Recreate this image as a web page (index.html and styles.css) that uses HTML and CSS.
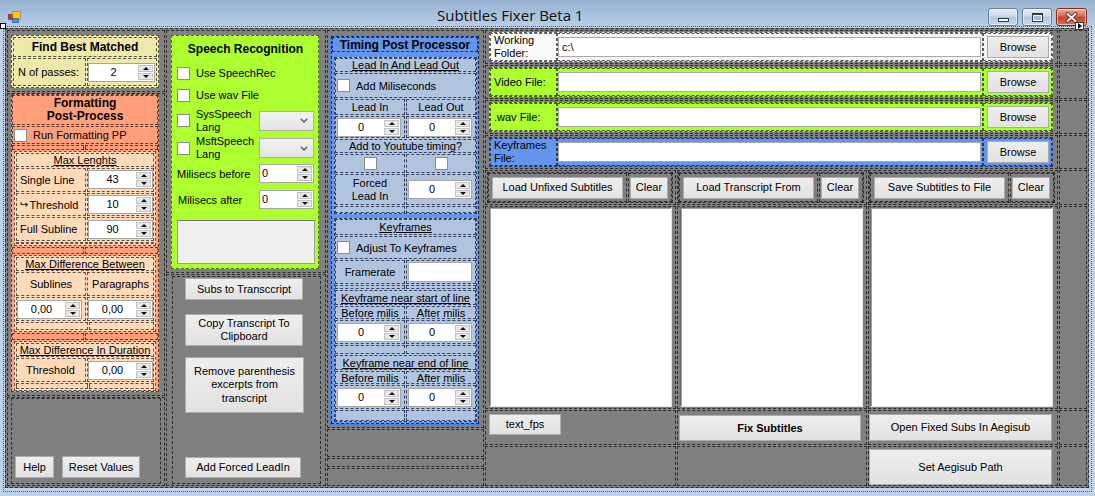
FILE: index.html
```html
<!DOCTYPE html>
<html>
<head>
<meta charset="utf-8">
<title>Subtitles Fixer Beta 1</title>
<link rel="stylesheet" href="styles.css">
</head>
<body>
<div class="titlebar">
  <svg class="appicon" width="14" height="14" viewBox="0 0 14 14">
    <rect x="0.5" y="5.5" width="4" height="5" fill="#d8232a" stroke="#8a1c1c" stroke-width="0.6"/>
    <rect x="4.5" y="2.5" width="8" height="8" fill="#f7c325" stroke="#b27c12" stroke-width="0.6"/>
    <rect x="4.5" y="9.5" width="6" height="4" fill="#3d8fe2" stroke="#1d4f98" stroke-width="0.6"/>
  </svg>
  <div class="title">Subtitles Fixer Beta 1</div>
  <div class="wbtns">
    <div class="wb"><span class="ic-min"></span></div>
    <div class="wb"><span class="ic-max"></span></div>
    <div class="wb close"><svg width="13" height="11" viewBox="0 0 13 11"><path d="M2.5 2 L10.5 9 M10.5 2 L2.5 9" stroke="#5a1a10" stroke-width="3.6" stroke-linecap="round"/><path d="M2.5 2 L10.5 9 M10.5 2 L2.5 9" stroke="#fff" stroke-width="2" stroke-linecap="round"/></svg></div>
  </div>
</div>
<span class="handle-l"></span>
<span class="handle-r"></span>

<div class="frame">
 <div class="client">

  <!-- column 1 -->
  <div class="col c1">
    <div class="d cell-find">
      <div class="panel khaki find">
        <div class="d hdr b">Find Best Matched</div>
        <div class="row2">
          <div class="d lblc">N of passes:</div>
          <div class="d inpc"><div class="num w67"><span class="v">2</span><span class="spin"><i></i><i></i></span></div></div>
        </div>
      </div>
    </div>
    <div class="d cell-fmt">
      <div class="panel salmon fmt">
        <div class="d ftitle b">Formatting<br>Post-Process</div>
        <div class="d frun"><span class="cb"></span><span>Run Formatting PP</span></div>
        <div class="fsp h5"><div class="d l"></div><div class="d r"></div></div>
        <div class="sub peach s1">
          <div class="d shdr"><span class="u">Max Lenghts</span></div>
          <div class="srow"><div class="d lab">Single Line</div><div class="d inp"><div class="num w65"><span class="v">43</span><span class="spin"><i></i><i></i></span></div></div></div>
          <div class="srow"><div class="d lab"><span class="hook">↪</span>Threshold</div><div class="d inp"><div class="num w65"><span class="v">10</span><span class="spin"><i></i><i></i></span></div></div></div>
          <div class="srow"><div class="d lab">Full Subline</div><div class="d inp"><div class="num w65"><span class="v">90</span><span class="spin"><i></i><i></i></span></div></div></div>
          <div class="fill"><div class="d l"></div><div class="d r"></div></div>
        </div>
        <div class="fsp h7"><div class="d l"></div><div class="d r"></div></div>
        <div class="sub peach s2">
          <div class="d shdr h16"><span class="u">Max Difference Between</span></div>
          <div class="srow h22"><div class="d lab ctr">Sublines</div><div class="d inp ctr">Paragraphs</div></div>
          <div class="srow h25"><div class="d lab p0"><div class="num w65"><span class="v">0,00</span><span class="spin"><i></i><i></i></span></div></div><div class="d inp"><div class="num w65"><span class="v">0,00</span><span class="spin"><i></i><i></i></span></div></div></div>
          <div class="fill"><div class="d l"></div><div class="d r"></div></div>
        </div>
        <div class="fsp h7"><div class="d l"></div><div class="d r"></div></div>
        <div class="sub peach s3">
          <div class="d shdr h15"><span class="u">Max Difference In Duration</span></div>
          <div class="srow h22"><div class="d lab p9">Threshold</div><div class="d inp"><div class="num w65"><span class="v">0,00</span><span class="spin"><i></i><i></i></span></div></div></div>
          <div class="fill"><div class="d l"></div><div class="d r"></div></div>
        </div>
      </div>
    </div>
    <div class="d cell-c1b">
      <div class="d box1">
        <div class="btn help">Help</div>
        <div class="btn reset">Reset Values</div>
      </div>
    </div>
  </div>

  <!-- column 2 -->
  <div class="col c2">
    <div class="d cell-sr">
      <div class="panel green sr">
        <div class="srtitle b">Speech Recognition</div>
        <div class="srr h22"><span class="cb"></span><span>Use SpeechRec</span></div>
        <div class="srr h22"><span class="cb"></span><span>Use wav File</span></div>
        <div class="srr h29"><span class="cb"></span><span class="two">SysSpeech<br>Lang</span>
          <div class="combo"><svg width="8" height="5" viewBox="0 0 8 5"><polyline points="0.8,0.8 4,4 7.2,0.8" fill="none" stroke="#606060" stroke-width="1.5"/></svg></div></div>
        <div class="srr h26"><span class="cb"></span><span class="two">MsftSpeech<br>Lang</span>
          <div class="combo"><svg width="8" height="5" viewBox="0 0 8 5"><polyline points="0.8,0.8 4,4 7.2,0.8" fill="none" stroke="#606060" stroke-width="1.5"/></svg></div></div>
        <div class="srr h25"><span>Milisecs before</span><div class="num w55 left ml-auto"><span class="v">0</span><span class="spin"><i></i><i></i></span></div></div>
        <div class="srr h27"><span class="ml1">Milisecs after</span><div class="num w55 left ml-auto"><span class="v">0</span><span class="spin"><i></i><i></i></span></div></div>
        <div class="srbox"></div>
      </div>
    </div>
    <div class="d cell-c2b">
      <div class="d box2">
        <div class="btn b1">Subs to Transccript</div>
        <div class="btn b2">Copy Transcript To<br>Clipboard</div>
        <div class="btn b3">Remove parenthesis<br>excerpts from<br>transcript</div>
        <div class="btn b4">Add Forced LeadIn</div>
      </div>
    </div>
  </div>

  <!-- column 3 -->
  <div class="col c3">
    <div class="d cell-tp">
      <div class="panel blue tp">
        <div class="d tphdr b">Timing Post Processor</div>
        <div class="band h5"></div>
        <div class="sub steel lead">
          <div class="d fr h14"><span class="u">Lead In And Lead Out</span></div>
          <div class="d fr h25 lefted"><span class="cb"></span><span>Add Miliseconds</span></div>
          <div class="tr h16"><div class="d tl">Lead In</div><div class="d trr">Lead Out</div></div>
          <div class="tr h22"><div class="d tl st"><div class="num w64"><span class="v">0</span><span class="spin"><i></i><i></i></span></div></div><div class="d trr st"><div class="num w64"><span class="v">0</span><span class="spin"><i></i><i></i></span></div></div></div>
          <div class="d fr h14">Add to Youtube timing?</div>
          <div class="tr h19"><div class="d tl"><span class="cb"></span></div><div class="d trr"><span class="cb"></span></div></div>
          <div class="tr h31"><div class="d tl two">Forced<br>Lead In</div><div class="d trr st"><div class="num w64"><span class="v">0</span><span class="spin"><i></i><i></i></span></div></div></div>
          <div class="tr grow"><div class="d tl"></div><div class="d trr"></div></div>
        </div>
        <div class="band h4"></div>
        <div class="sub steel kf">
          <div class="d fr h16"><span class="u">Keyframes</span></div>
          <div class="d fr h23 lefted"><span class="cb"></span><span>Adjust To Keyframes</span></div>
          <div class="tr h24"><div class="d tl">Framerate</div><div class="d trr st"><div class="tb fr-tb"></div></div></div>
          <div class="tr h4"><div class="d tl"></div><div class="d trr"></div></div>
          <div class="d fr h15"><span class="u">Keyframe near start of line</span></div>
          <div class="tr h13"><div class="d tl">Before milis</div><div class="d trr">After milis</div></div>
          <div class="tr h24"><div class="d tl st"><div class="num w64"><span class="v">0</span><span class="spin"><i></i><i></i></span></div></div><div class="d trr st"><div class="num w64"><span class="v">0</span><span class="spin"><i></i><i></i></span></div></div></div>
          <div class="tr h9"><div class="d tl"></div><div class="d trr"></div></div>
          <div class="d fr h15"><span class="u">Keyframe near end of line</span></div>
          <div class="tr h13"><div class="d tl">Before milis</div><div class="d trr">After milis</div></div>
          <div class="tr h24"><div class="d tl st"><div class="num w64"><span class="v">0</span><span class="spin"><i></i><i></i></span></div></div><div class="d trr st"><div class="num w64"><span class="v">0</span><span class="spin"><i></i><i></i></span></div></div></div>
          <div class="tr grow"><div class="d tl"></div><div class="d trr"></div></div>
        </div>
      </div>
    </div>
    <div class="d h28"></div>
    <div class="d h9"></div>
    <div class="d grow"></div>
  </div>

  <!-- right area -->
  <div class="right">
    <div class="d frow">
      <div class="fpanel white">
        <div class="d flab two">Working<br>Folder:</div>
        <div class="d ftxt"><div class="tb ftb">c:\</div></div>
        <div class="d fbr"><div class="btn browse">Browse</div></div>
      </div>
    </div>
    <div class="d dcol"></div>
    <div class="d frow">
      <div class="fpanel green">
        <div class="d flab">Video File:</div>
        <div class="d ftxt"><div class="tb ftb"></div></div>
        <div class="d fbr"><div class="btn browse">Browse</div></div>
      </div>
    </div>
    <div class="d dcol"></div>
    <div class="d frow">
      <div class="fpanel green">
        <div class="d flab">.wav File:</div>
        <div class="d ftxt"><div class="tb ftb"></div></div>
        <div class="d fbr"><div class="btn browse">Browse</div></div>
      </div>
    </div>
    <div class="d dcol"></div>
    <div class="d frow">
      <div class="fpanel blue">
        <div class="d flab two">Keyframes<br>File:</div>
        <div class="d ftxt"><div class="tb ftb"></div></div>
        <div class="d fbr"><div class="btn browse">Browse</div></div>
      </div>
    </div>
    <div class="d dcol"></div>

    <div class="d gcell ga">
      <div class="d grp"><div class="d gb"><div class="btn gbtn">Load Unfixed Subtitles</div></div><div class="d gc"><div class="btn clr">Clear</div></div></div>
    </div>
    <div class="d gcell gbb">
      <div class="d grp"><div class="d gb"><div class="btn gbtn">Load Transcript From</div></div><div class="d gc"><div class="btn clr">Clear</div></div></div>
    </div>
    <div class="d gcell gcc">
      <div class="d grp"><div class="d gb"><div class="btn gbtn">Save Subtitles to File</div></div><div class="d gc"><div class="btn clr">Clear</div></div></div>
    </div>
    <div class="d dcol"></div>

    <div class="d tac ta-a"><div class="ta"></div></div>
    <div class="d tac ta-b"><div class="ta"></div></div>
    <div class="d tac ta-c"><div class="ta"></div></div>
    <div class="d dcol"></div>

    <div class="d r7a"><div class="btn fps">text_fps</div></div>
    <div class="d r7b"><div class="btn fix b11">Fix Subtitles</div></div>
    <div class="d r7c"><div class="btn open">Open Fixed Subs In Aegisub</div></div>
    <div class="d dcol"></div>

    <div class="d"></div>
    <div class="d"></div>
    <div class="d r8c"><div class="btn aeg">Set Aegisub Path</div></div>
    <div class="d dcol"></div>
  </div>

 </div>
</div>
</body>
</html>
```

FILE: styles.css
```css
*{box-sizing:border-box;margin:0;padding:0}
html,body{width:1095px;height:496px;overflow:hidden}
body{background:#bed3ea;font-family:"Liberation Sans",Arial,sans-serif;font-size:11px;color:#000;position:relative}

/* title bar */
.titlebar{height:26px;display:flex;align-items:flex-start;padding-left:8px;background:linear-gradient(#98b2d1,#a9c2df 60%,#b6cde7)}
.appicon{margin-top:9px;flex:none}
.title{margin-left:415px;margin-top:5px;font-family:"Open Sans","Noto Sans",sans-serif;font-size:15px;line-height:20px;color:#101010}
.wbtns{margin-left:auto;margin-right:8px;margin-top:8px;display:flex;gap:4px}
.wb{width:30px;height:18px;border:1px solid #6a7e9b;border-radius:3px;background:linear-gradient(#e6edf6 0%,#ccd9ea 45%,#b3c6de 50%,#c7d7ea 100%);display:flex;align-items:center;justify-content:center;box-shadow:inset 0 0 0 1px rgba(255,255,255,.55)}
.wb.close{width:31px;border-color:#7b2a1c;background:linear-gradient(#eab0a2 0%,#d46a52 45%,#c2432a 50%,#d7715a 100%)}
.ic-min{width:11px;height:4px;margin-top:6px;background:#fff;border:1px solid #2c3a50}
.ic-max{width:11px;height:9px;border:1px solid #2c3a50;border-top-width:2px;box-shadow:inset 0 0 0 1px #fff;background:#a9bcd5}
.handle-l{position:absolute;left:0;top:23px;width:6px;height:6px;background:#fff;border:1px solid #000}
.handle-r{position:absolute;left:1075px;top:22px;width:9px;height:8px;background:#fff;border:1px solid #333;display:flex;align-items:center;justify-content:center}
.handle-r::after{content:"";border-top:3px solid transparent;border-bottom:3px solid transparent;border-left:4px solid #000;margin-left:1px}

/* frame & client */
.frame{margin:0 3px;height:466px;border:1px dotted #4d5a69;padding:1px 0 0 1px}
.client{width:1084px;height:460px;background:#808080;border:1px dashed #2e2e2e;padding:1px;display:flex;gap:1px}
.d{border:1px dashed rgba(0,0,0,.62)}
.col{display:flex;flex-direction:column;gap:1px}
.c1{width:158px}
.c2{width:160px}
.c3{width:157px}
.grow{flex:1}
.b{font-weight:bold;font-size:12px}
.b11{font-weight:bold}
.u{text-decoration:underline;text-underline-offset:1px}
.two{line-height:13px}

/* common controls */
.cb{width:13px;height:13px;background:#fff;border:1px solid #8b8c8c;flex:none;display:block}
.num{display:flex;height:19px;background:#fff;border:1px solid #a6a6a6;flex:none}
.num .v{flex:1;text-align:center;line-height:17px}
.num.left .v{text-align:left;padding-left:2px}
.w67{width:67px}.w65{width:65px}.w64{width:64px}.w55{width:55px}
.spin{width:16px;display:flex;flex-direction:column;gap:1px;padding:1px 1px 1px 0;flex:none}
.spin i{flex:1;background:#e7e7e7;border:1px solid #c4c4c4;display:flex;align-items:center;justify-content:center}
.spin i::after{content:"";border-left:3px solid transparent;border-right:3px solid transparent}
.spin i:first-child::after{border-bottom:3px solid #111}
.spin i:last-child::after{border-top:3px solid #111}
.btn{display:flex;align-items:center;justify-content:center;text-align:center;background:linear-gradient(#eeeeee,#e2e2e2);border:1px solid #acacac;line-height:13px;flex:none;color:#000}
.tb{background:#fff;border:1px solid #a9abaf}
.combo{margin-left:auto;width:55px;height:20px;background:linear-gradient(#f3f3f3,#e3e3e3);border:1px solid #acacac;display:flex;align-items:center;justify-content:flex-end;padding-right:5px;flex:none}
.ml-auto{margin-left:auto}
.ml1{margin-left:1px}

.panel{display:flex;flex-direction:column}
.khaki{background:#eee8aa}
.salmon{background:#ffa07a}
.peach{background:#ffdab9}
.green{background:#adff2f}
.blue{background:#6495ed}
.steel{background:#b0c4de}
.white{background:#f5f5f5}

/* column 1 */
.cell-find{height:62px;padding:4px 0 0 3px}
.find{width:148px;height:53px;border:1px dashed rgba(0,0,0,.62);padding:1px;gap:1px}
.find .hdr{height:20px;display:flex;align-items:center;justify-content:center}
.row2{flex:1;display:flex;gap:1px}
.lblc{width:73px;display:flex;align-items:center;padding-left:4px}
.inpc{flex:1;display:flex;align-items:center}
.cell-fmt{height:303px;padding:0 0 0 3px}
.fmt{width:148px;height:298px;border:1px dashed rgba(0,0,0,.62);gap:1px}
.ftitle{height:30px;display:flex;align-items:center;justify-content:center;text-align:center;line-height:13px}
.frun{height:18px;display:flex;align-items:center;padding-left:1px;gap:6px}
.fsp{display:flex;gap:1px}
.fsp .l,.fill .l{width:72px}
.fsp .r,.fill .r{flex:1}
.h5{height:5px}.h7{height:7px}.h4{height:4px}.h9{height:9px}
.h13{height:13px}.h14{height:14px}.h15{height:15px}.h16{height:16px}.h19{height:19px}
.h22{height:22px}.h23{height:23px}.h24{height:24px}.h25{height:25px}.h26{height:26px}.h27{height:27px}.h28{height:28px}.h29{height:29px}.h31{height:31px}
.sub{border:1px dashed rgba(0,0,0,.62);padding:1px;display:flex;flex-direction:column;gap:1px;margin:0 2px}
.s1{height:95px}
.s2{height:77px}
.s3{flex:1}
.shdr{height:14px;display:flex;align-items:center;justify-content:center}
.srow{height:24px;display:flex;gap:1px}
.srow .lab{width:70px;display:flex;align-items:center;padding-left:3px}
.srow .inp{flex:1;display:flex;align-items:center}
.srow .ctr{justify-content:center;padding-left:0}
.srow .p0{padding-left:0}
.srow .p9{padding-left:9px}
.hook{font-family:"DejaVu Sans",sans-serif;font-size:10px;margin-right:1px}
.fill{flex:1;display:flex;gap:1px}
.cell-c1b{flex:1;padding:0 3px 1px 3px}
.box1{height:100%;display:flex;align-items:flex-end;gap:8px;padding:0 0 5px 3px}
.help{width:39px;height:22px}
.reset{width:78px;height:22px}

/* column 2 */
.cell-sr{height:243px;padding:4px 0 0 4px}
.sr{width:148px;height:234px;border:1px dashed rgba(0,0,0,.55);padding:0 4px 0 5px}
.srtitle{height:26px;display:flex;align-items:center;justify-content:center}
.srr{display:flex;align-items:center}
.srr .cb{margin-right:6px}
.srbox{margin-top:7px;height:44px;width:138px;background:#f0f0f0;border:1px solid #9c9c9c;border-top-color:#7a7a7a}
.cell-c2b{flex:1;padding:1px 4px 1px 5px}
.box2{height:100%;display:flex;flex-direction:column;align-items:flex-start;padding-left:12px}
.b1{width:118px;height:22px;margin-top:1px}
.b2{width:118px;height:32px;margin-top:14px}
.b3{width:119px;height:56px;margin-top:11px;line-height:13.5px}
.b4{width:116px;height:21px;margin-top:auto;margin-bottom:5px}

/* column 3 */
.cell-tp{height:398px;padding:5px 0 0 3px}
.tp{width:148px;height:388px;border:1px dashed #1a2a55;box-shadow:0 0 0 1px #4b7fe8}
.tphdr{height:15px;display:flex;align-items:center;justify-content:center;border-color:rgba(10,20,60,.7)}
.band{flex:none}
.tp .sub{margin:0 1px 0 2px;padding:0;border-color:rgba(10,20,60,.75)}
.lead{height:157px}
.kf{height:204px}
.fr{display:flex;align-items:center;justify-content:center;flex:none}
.fr.lefted{justify-content:flex-start;padding-left:1px;gap:6px}
.tr{display:flex;gap:1px;flex:none}
.tr.grow{flex:1}
.tl{width:70px;display:flex;align-items:center;justify-content:center;text-align:center}
.trr{flex:1;display:flex;align-items:center;justify-content:center}
.tl.st,.trr.st{justify-content:flex-start;padding-left:1px}
.tp .d{border-color:rgba(10,20,60,.72)}
.fr-tb{width:64px;height:20px}

/* right area */
.right{flex:1;display:grid;grid-template-columns:191px 190px 190px 1fr;grid-template-rows:34px 34px 34px 34px 35px 203px 35px 1fr;gap:1px}
.frow{grid-column:1 / 4;padding:1px 4px 1px 3px}
.fpanel{height:30px;display:grid;grid-template-columns:67px 1fr 69px;border:1px dashed rgba(0,0,0,.62)}
.fpanel .d{border-color:rgba(0,0,0,.62)}
.flab{display:flex;align-items:center;padding-left:3px}
.fpanel.white .flab{background:#fafafa}
.ftxt{display:flex;align-items:center;padding-right:1px}
.ftb{width:423px;height:20px;padding-left:3px;line-height:18px}
.fbr{display:flex;align-items:center;padding-left:3px}
.browse{width:62px;height:22px}
.gcell{padding:1px 2px 1px 1px}
.grp{height:100%;display:flex;gap:1px}
.gb{width:139px;display:flex;align-items:center;padding-left:3px}
.gc{flex:1;display:flex;align-items:center;padding-left:1px}
.gbtn{width:131px;height:22px}
.clr{width:38px;height:22px}
.gbb{padding-left:0}
.gcc{padding-left:0}
.tac{padding:0 0 1px 3px}
.ta-b{padding-left:2px}
.ta-c{padding-left:1px}
.ta{width:183px;height:200px;background:#fff;border:1px solid;border-color:#6a6a6a #e3e3e3 #e3e3e3 #6a6a6a;box-shadow:inset 1px 1px 0 #a0a0a0}
.r7a{padding:3px 0 0 3px}
.fps{width:72px;height:21px}
.r7b{padding:4px 0 0 1px}
.fix{width:182px;height:26px}
.r7c{padding:3px 0 0 0}
.open{width:183px;height:27px}
.r8c{padding:2px 0 0 0}
.aeg{width:183px;height:36px}
```
